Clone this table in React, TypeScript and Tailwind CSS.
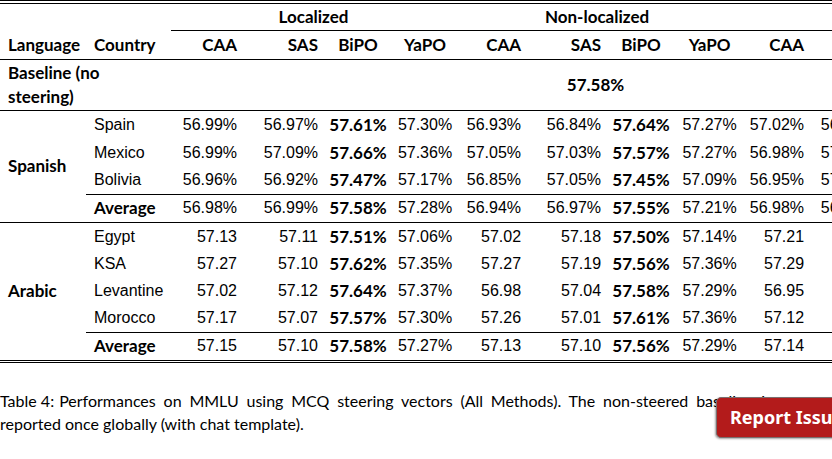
import React from "react";

type Row = {
  country: string;
  vals: string[];
  avg?: boolean;
  h: string;
};

// method columns: width and alignment
const cols: { w: number; align: "right" | "center" }[] = [
  { w: 74, align: "right" },
  { w: 81, align: "right" },
  { w: 64, align: "center" },
  { w: 70, align: "center" },
  { w: 69, align: "right" },
  { w: 80, align: "right" },
  { w: 64, align: "center" },
  { w: 73, align: "center" },
  { w: 66, align: "right" },
  { w: 71, align: "right" },
  { w: 67, align: "center" },
  { w: 70, align: "center" },
];

const methods = ["CAA", "SAS", "BiPO", "YaPO"];
const bestIdx = [2, 6, 10];

const spanish: Row[] = [
  { country: "Spain", h: "h-[28px]", vals: ["56.99%", "56.97%", "57.61%", "57.30%", "56.93%", "56.84%", "57.64%", "57.27%", "57.02%", "56.91%", "57.60%", "57.25%"] },
  { country: "Mexico", h: "h-[28px]", vals: ["56.99%", "57.09%", "57.66%", "57.36%", "57.05%", "57.03%", "57.57%", "57.27%", "56.98%", "57.01%", "57.59%", "57.30%"] },
  { country: "Bolivia", h: "h-[27px]", vals: ["56.96%", "56.92%", "57.47%", "57.17%", "56.85%", "57.05%", "57.45%", "57.09%", "56.95%", "57.04%", "57.48%", "57.12%"] },
  { country: "Average", h: "h-[29px]", avg: true, vals: ["56.98%", "56.99%", "57.58%", "57.28%", "56.94%", "56.97%", "57.55%", "57.21%", "56.98%", "56.99%", "57.56%", "57.22%"] },
];

const arabic: Row[] = [
  { country: "Egypt", h: "h-[28px]", vals: ["57.13", "57.11", "57.51%", "57.06%", "57.02", "57.18", "57.50%", "57.14%", "57.21", "57.09", "57.52%", "57.11%"] },
  { country: "KSA", h: "h-[27px]", vals: ["57.27", "57.10", "57.62%", "57.35%", "57.27", "57.19", "57.56%", "57.36%", "57.29", "57.14", "57.60%", "57.33%"] },
  { country: "Levantine", h: "h-[27px]", vals: ["57.02", "57.12", "57.64%", "57.37%", "56.98", "57.04", "57.58%", "57.29%", "56.95", "57.08", "57.61%", "57.31%"] },
  { country: "Morocco", h: "h-[27px]", vals: ["57.17", "57.07", "57.57%", "57.30%", "57.26", "57.01", "57.61%", "57.36%", "57.12", "57.05", "57.58%", "57.34%"] },
  { country: "Average", h: "h-[31px]", avg: true, vals: ["57.15", "57.10", "57.58%", "57.27%", "57.13", "57.10", "57.56%", "57.29%", "57.14", "57.09", "57.58%", "57.27%"] },
];

const head = "font-['Lato',sans-serif] font-bold text-[17px] text-black";
const num = "font-['Liberation_Sans',Arial,sans-serif] text-[16px] text-black";

function Group({ lang, rows, last }: { lang: string; rows: Row[]; last?: boolean }) {
  const endLine = last ? "border-b-[3px] border-double border-black" : "border-b border-black";
  return (
    <>
      {rows.map((r, ri) => {
        const line = r.avg ? `border-t border-black ${endLine}` : "";
        return (
          <tr key={r.country + ri}>
            {ri === 0 && (
              <td rowSpan={rows.length} className={`${head} ${endLine} p-0 pl-2 align-middle`}>
                {lang}
              </td>
            )}
            <td className={`${r.h} ${line} p-0 pl-2 whitespace-nowrap ${r.avg ? head : num}`}>{r.country}</td>
            {r.vals.map((v, i) => {
              const c = cols[i];
              return (
                <td
                  key={i}
                  className={`${line} p-0 whitespace-nowrap ${c.align === "right" ? "text-right pr-2" : "text-center"} ${
                    bestIdx.includes(i) ? head : num
                  }`}
                >
                  {v}
                </td>
              );
            })}
          </tr>
        );
      })}
    </>
  );
}

export default function App() {
  return (
    <div className="relative w-[832px] h-[459px] overflow-hidden bg-white">
      <div className="overflow-hidden">
        <table className="table-fixed border-separate border-spacing-0 w-[1020px]">
          <colgroup>
            <col className="w-[86px]" />
            <col className="w-[85px]" />
            {cols.map((c, i) => (
              <col key={i} style={{ width: c.w }} />
            ))}
          </colgroup>
          <thead>
            <tr>
              <th className="h-[30px] p-0 border-t-[4px] border-double border-black" />
              <th className="p-0 border-t-[4px] border-double border-black" />
              <th colSpan={4} className={`${head} p-0 pr-1 border-t-[4px] border-double border-b border-black`}>
                Localized
              </th>
              <th colSpan={4} className={`${head} p-0 pr-3 border-t-[4px] border-double border-b border-black`}>
                Non-localized
              </th>
              <th colSpan={4} className={`${head} p-0 border-t-[4px] border-double border-b border-black`} />
            </tr>
            <tr>
              <th className={`${head} h-[29px] p-0 pl-2 text-left border-b border-black`}>Language</th>
              <th className={`${head} p-0 pl-2 text-left border-b border-black`}>Country</th>
              {cols.map((c, i) => (
                <th
                  key={i}
                  className={`${head} p-0 border-b border-black ${c.align === "right" ? "text-right pr-2" : "text-center"}`}
                >
                  {methods[i % 4]}
                </th>
              ))}
            </tr>
          </thead>
          <tbody>
            <tr>
              <td colSpan={2} className={`${head} h-[51px] p-0 pl-2 leading-[24px] border-b border-black`}>
                Baseline (no
                <br />
                steering)
              </td>
              <td colSpan={12} className={`${head} p-0 text-center border-b border-black`}>
                57.58%
              </td>
            </tr>
            <Group lang="Spanish" rows={spanish} />
            <Group lang="Arabic" rows={arabic} last />
          </tbody>
        </table>
      </div>

      <p className="mt-[26px] w-[772px] text-justify font-['Lato',sans-serif] text-[16px] leading-[23px] text-black">
        <span className="inline-block mr-[5px]">Table 4:</span>Performances on MMLU using MCQ steering vectors (All
        Methods). The non-steered baseline is reported once globally (with chat template).
      </p>

      <button
        type="button"
        className="absolute left-[716px] top-[397px] h-[41px] w-[140px] rounded-[5px] border border-[#7a6f6f] bg-[#b31b1b] pl-[13px] text-left font-['Noto_Sans',sans-serif] text-[18px] font-bold text-white shadow-[-1px_1px_2px_rgba(0,0,0,0.35)]"
      >
        Report Issue
      </button>
    </div>
  );
}
